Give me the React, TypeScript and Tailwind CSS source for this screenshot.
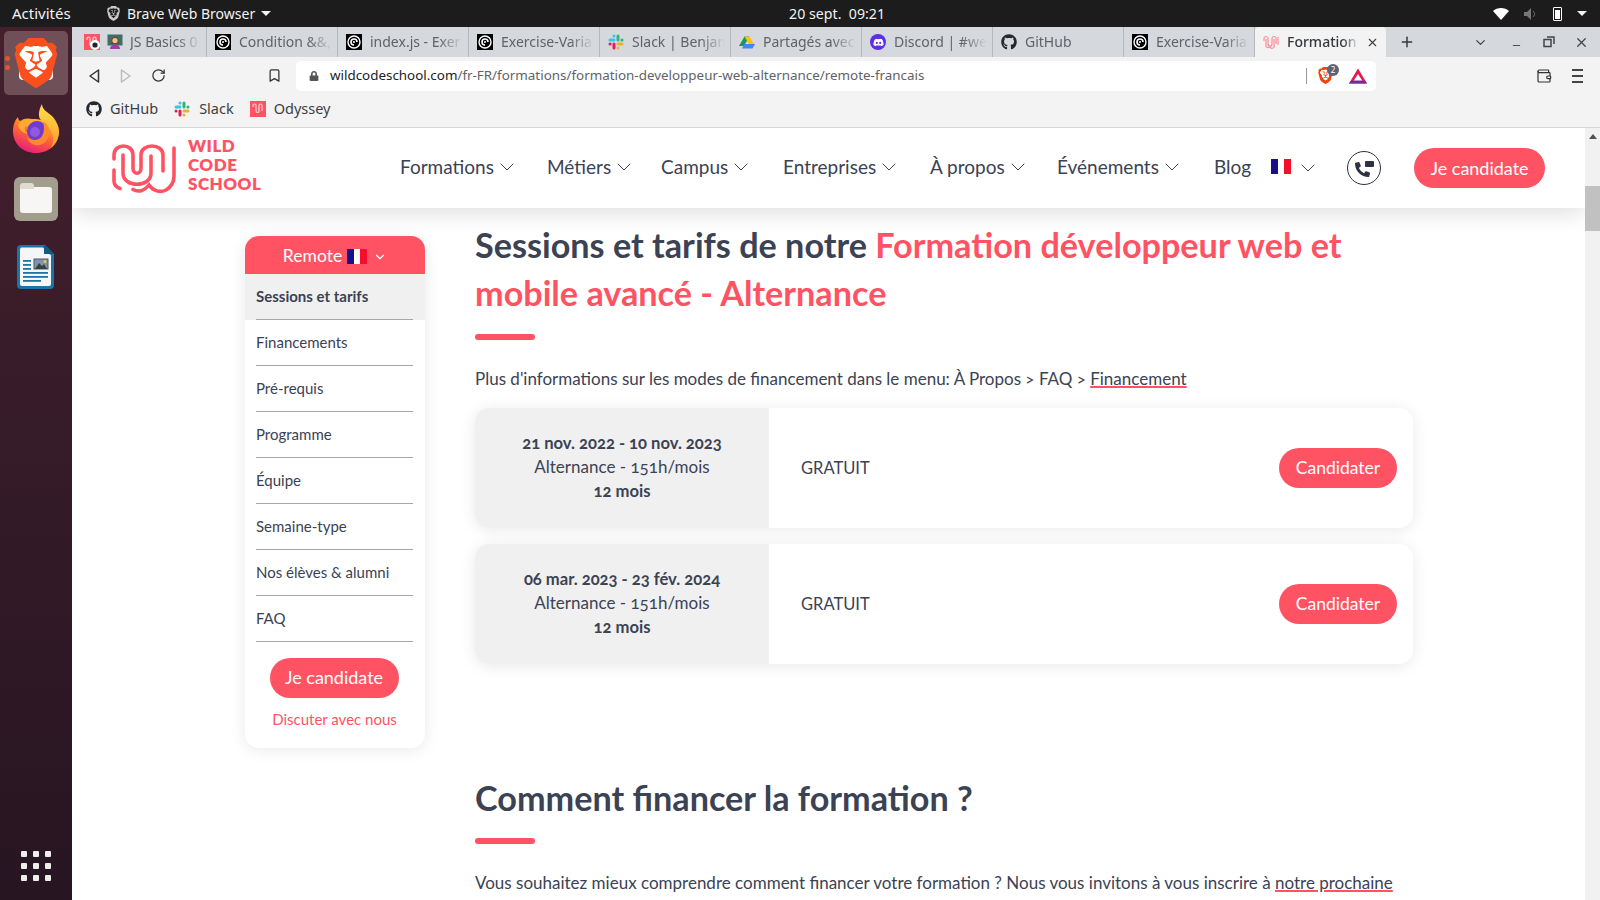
import React from "react";
import { FaGithub, FaDiscord, FaPhoneAlt, FaLock } from "react-icons/fa";
import { SiBrave } from "react-icons/si";
import { ChevronDown, Plus, X, Minus, RotateCw, Bookmark, Wallet } from "lucide-react";

const coral = "text-[#ff5364]";

const BraveIcon = ({ size = 48 }: { size?: number }) => (
  <span className="relative inline-flex items-center justify-center" style={{ width: size, height: size }}>
    <span className="absolute inset-[16%] bg-white rounded-sm" />
    <SiBrave className="relative text-[#fb4f1e]" size={size} />
  </span>
);

const Swirl = () => (
  <svg width="16" height="16" viewBox="0 0 16 16" className="shrink-0">
    <rect width="16" height="16" fill="#000" />
    <circle cx="8" cy="8" r="6" fill="none" stroke="#fff" strokeWidth="1.4" />
    <path d="M8 11a3 3 0 1 1 3-3" fill="none" stroke="#fff" strokeWidth="1.6" />
    <circle cx="8" cy="8" r="1" fill="#fff" />
  </svg>
);

const OdysseyIcon = ({ dot }: { dot?: boolean }) => (
  <svg width="16" height="16" viewBox="0 0 16 16" className="shrink-0">
    <rect width="16" height="16" fill="#ff5364" />
    <path d="M3 6V4.500a1.500 1.500 0 0 1 3 0V10a1.500 1.500 0 0 0 3 0V4.500a1.500 1.500 0 0 1 3 0V10" fill="none" stroke="#ffd5d9" strokeWidth="1.2" />
    {dot && <circle cx="11" cy="11" r="5" fill="#fff" />}
    {dot && <circle cx="11" cy="11" r="2.6" fill="#1f2430" />}
  </svg>
);

const ActiveFavicon = () => (
  <svg width="16" height="16" viewBox="0 0 16 16" className="shrink-0" fill="none" stroke="#ff8d98" strokeWidth="1.2">
    <path d="M1 7V4.500a2 2 0 0 1 4 0V10a2 2 0 0 0 4 0V4.500a2 2 0 0 1 4 0V10" />
    <path d="M3 5v6a2 2 0 0 0 4 1M11 5v6a2 2 0 0 1-4 2M15 3v8" />
  </svg>
);

const SlackIcon = () => (
  <svg width="16" height="16" viewBox="0 0 16 16" className="shrink-0" strokeLinecap="round" strokeWidth="3" fill="none">
    <path d="M6 2v.1M2 6h4" stroke="#36c5f0" />
    <path d="M14 6h-.1M10 2v4" stroke="#2eb67d" />
    <path d="M10 14v-.1M14 10h-4" stroke="#ecb22e" />
    <path d="M2 10h.1M6 14v-4" stroke="#e01e5a" />
  </svg>
);

const DriveIcon = () => (
  <svg width="16" height="16" viewBox="0 0 16 16" className="shrink-0">
    <path d="M5.500 1.500h5L5 11H0z" fill="#0f9d58" transform="translate(0 1)" />
    <path d="M5.500 2.500h5l5.500 9.500h-5z" fill="#ffc107" />
    <path d="M3 14.500 5.500 10H16l-2.500 4.500z" fill="#4285f4" />
  </svg>
);

const TeacherEmoji = () => (
  <svg width="16" height="16" viewBox="0 0 16 16" className="shrink-0">
    <rect x="0.500" y="0.500" width="15" height="11" fill="#3e6e64" />
    <path d="M3 15c0-3 2-4.500 5-4.500s5 1.500 5 4.500z" fill="#9a3fb0" />
    <path d="M4.500 8c0-7 7-7 7 0l.5 2H4z" fill="#6b4a2f" />
    <circle cx="8" cy="6.500" r="2.600" fill="#f3c28f" />
  </svg>
);

const tabs = [
  { label: "JS Basics 0", icon: <TeacherEmoji />, first: true },
  { label: "Condition &&,", icon: <Swirl /> },
  { label: "index.js - Exer", icon: <Swirl /> },
  { label: "Exercise-Varia", icon: <Swirl /> },
  { label: "Slack | Benjam", icon: <SlackIcon /> },
  { label: "Partagés avec", icon: <DriveIcon /> },
  { label: "Discord | #wel", icon: <span className="w-4 h-4 rounded-full bg-[#5c2ee6] flex items-center justify-center shrink-0"><FaDiscord size={11} className="text-white" /></span> },
  { label: "GitHub", icon: <FaGithub size={16} className="text-[#24292e] shrink-0" /> },
  { label: "Exercise-Varia", icon: <Swirl /> },
];

const navItems = [
  { label: "Formations", width: "w-[147px]" },
  { label: "Métiers", width: "w-[114px]" },
  { label: "Campus", width: "w-[122px]" },
  { label: "Entreprises", width: "w-[147px]" },
  { label: "À propos", width: "w-[127px]" },
  { label: "Événements", width: "w-[157px]" },
];

const sideItems = ["Sessions et tarifs", "Financements", "Pré-requis", "Programme", "Équipe", "Semaine-type", "Nos élèves & alumni", "FAQ"];

const sessions = [
  { dates: "21 nov. 2022 - 10 nov. 2023" },
  { dates: "06 mar. 2023 - 23 fév. 2024" },
];

const Flag = ({ className }: { className: string }) => (
  <span className={"flex shrink-0 " + className}>
    <span className="flex-1 bg-[#1a0f8a]" />
    <span className="flex-1 bg-white" />
    <span className="flex-1 bg-[#f50f2d]" />
  </span>
);

const Logo = () => (
  <svg width="80" height="60" viewBox="0 0 80 60" fill="none" stroke="#ff5364" strokeWidth="3.6" strokeLinecap="round" className="shrink-0">
    <path d="M6 32V43C6 46 8 49 12 50.500" />
    <path d="M6 21V17C6 5 25 5 25 17V30C25 37 33 37 33 30V17C33 5 55 5 55 17V33" />
    <path d="M15 17V35C15 50 43 50 43 35V18" />
    <path d="M25 51.500C31 55 37 52 41 47C45 53 52 55 58 52C63 49 66 44 66 38V10" />
  </svg>
);

const Firefox = () => (
  <svg width="48" height="50" viewBox="0 0 48 50">
    <defs>
      <linearGradient id="ffa" x1="0.800" y1="0" x2="0.300" y2="1">
        <stop offset="0" stopColor="#ffd43a" />
        <stop offset="0.500" stopColor="#ff6a2f" />
        <stop offset="1" stopColor="#e8197e" />
      </linearGradient>
      <linearGradient id="ffb" x1="0.500" y1="0" x2="0.500" y2="1">
        <stop offset="0" stopColor="#ffe04a" />
        <stop offset="1" stopColor="#ff9a2a" />
      </linearGradient>
    </defs>
    <path d="M1 27c0-6 2-11 5-14 0 2 1 3 2 4 4-3 8-3 12-2 6 0 14 0 27 12 0 13-10 22-23 22S1 40 1 27z" fill="url(#ffa)" />
    <path d="M30 0c0 6 6 8 11 13 4 5 6 10 6 14 0 7-3 13-8 17 3-6 3-13-1-19-3-5-7-6-10-10-2-4-1-10 2-15z" fill="url(#ffb)" />
    <path d="M6 21c3-6 12-8 19-4-4 0-7 2-8 5l-4 1c-1 3 1 5 3 7-5-1-9-4-10-9z" fill="#ffa930" />
    <circle cx="25" cy="27" r="10" fill="#6f3bd0" />
    <circle cx="23" cy="28" r="5" fill="#8f5ae0" />
    <path d="M31 17c6 4 8 11 5 17-3 6-8 8-13 7-4-1-7-4-8-8 3 3 8 4 12 2 5-3 6-10 4-18z" fill="#ff8a2b" />
  </svg>
);

const Files = () => (
  <div className="w-[44px] h-[44px] rounded-[6px] bg-[#a39d8d] flex items-center justify-center">
    <div className="relative w-[32px] h-[26px] rounded-[3px] bg-[#f7f6f4] mt-[2px]">
      <span className="absolute -top-[4px] left-0 w-[14px] h-[6px] rounded-t-[3px] bg-[#dfdbd1]" />
    </div>
  </div>
);

const Writer = () => (
  <svg width="38" height="46" viewBox="0 0 38 46">
    <path d="M4 1h24l9 9v31a4 4 0 0 1-4 4H4a4 4 0 0 1-4-4V5a4 4 0 0 1 4-4z" fill="#1b75a8" />
    <path d="M4 3.500h22l8 8V40a2 2 0 0 1-2 2H5a2 2 0 0 1-2-2V5z" fill="#f4f6f8" />
    <path d="M27 0l10 10H27z" fill="#125a85" />
    <rect x="6" y="16" width="8" height="1.800" fill="#1b75a8" />
    <rect x="6" y="20" width="8" height="1.800" fill="#1b75a8" />
    <rect x="6" y="24" width="8" height="1.800" fill="#1b75a8" />
    <rect x="6" y="28" width="25" height="1.800" fill="#1b75a8" />
    <rect x="6" y="32" width="25" height="1.800" fill="#1b75a8" />
    <rect x="6" y="36" width="18" height="1.800" fill="#1b75a8" />
    <rect x="17" y="15" width="14" height="10" fill="#7f96a8" stroke="#46586a" />
    <path d="M18 25l4-6 3 3 2-2 3 5z" fill="#3a4048" />
    <circle cx="28" cy="17.500" r="1.500" fill="#f4c63a" />
  </svg>
);

const Triangle = () => (
  <svg width="18" height="16" viewBox="0 0 18 16">
    <path d="M9 0.500 18 15.500H0z" fill="#e8174f" />
    <path d="M9 6 13.500 13h-9z" fill="#fff" />
    <path d="M0 15.500h18l-2-3H2z" fill="#7a2a9c" />
  </svg>
);

const SessionCard = ({ dates }: { dates: string }) => (
  <div className="flex h-[120px] rounded-[14px] overflow-hidden bg-white shadow-[0_2px_16px_rgba(0,0,0,0.09)]">
    <div className="w-[294px] bg-[#f0f0f0] flex flex-col items-center justify-center pb-[2px] text-[16.600px] leading-[24px]">
      <span className="font-bold">{dates}</span>
      <span className="text-[17px]">Alternance - 151h/mois</span>
      <span className="font-bold">12 mois</span>
    </div>
    <div className="flex-1 flex items-center justify-between pl-[32px] pr-[16px]">
      <span className="text-[16.500px]">GRATUIT</span>
      <button className="w-[118px] h-[40px] rounded-full bg-[#ff5364] text-white text-[17.500px]">Candidater</button>
    </div>
  </div>
);

const App: React.FC = () => {
  return (
    <div className="h-screen flex flex-col overflow-hidden bg-white font-['Noto_Sans',sans-serif]">
      {/* gnome bar */}
      <div className="h-[27px] shrink-0 bg-[#1c1c1c] text-[#f2f2f2] text-[14px] flex items-center relative">
        <span className="ml-[12px] w-[94px] text-[15px]">Activités</span>
        <SiBrave size={15} className="text-[#c9c9c9]" />
        <span className="ml-[6px]">Brave Web Browser</span>
        <span className="ml-[6px] w-0 h-0 border-x-[5px] border-x-transparent border-t-[5px] border-t-[#f2f2f2]" />
        <span className="flex-1 text-center pr-[90px] text-[14.200px]">20 sept.&nbsp; 09:21</span>
        <svg width="16" height="12" viewBox="0 0 16 12" className="mr-[14px]"><path d="M8 12 0 3c4-4 12-4 16 0z" fill="#fff" /></svg>
        <svg width="14" height="14" viewBox="0 0 14 14" className="mr-[16px]"><path d="M1 5h3l4-4v12L4 9H1z" fill="#777" /><path d="M10 4c2 2 2 4 0 6" stroke="#777" fill="none" /></svg>
        <span className="relative w-[9px] h-[14px] border border-white rounded-[1px] flex items-end p-[1px] mr-[15px]"><span className="w-full h-[9px] bg-white" /></span>
        <span className="mr-[13px] w-0 h-0 border-x-[5px] border-x-transparent border-t-[5px] border-t-[#f2f2f2]" />
      </div>

      <div className="flex flex-1 min-h-0">
        {/* dock */}
        <div className="w-[72px] shrink-0 bg-gradient-to-b from-[#44202d] to-[#271522] flex flex-col items-center relative pt-[4px]">
          <div className="w-[64px] h-[64px] rounded-[5px] bg-[#6f5058] flex items-center justify-center">
            <BraveIcon size={50} />
          </div>
          <span className="absolute left-[5px] top-[29px] w-[5px] h-[5px] rounded-full bg-[#e95420]" />
          <span className="absolute left-[5px] top-[38px] w-[5px] h-[5px] rounded-full bg-[#e95420]" />
          <div className="mt-[9px] h-[50px]"><Firefox /></div>
          <div className="mt-[23px]"><Files /></div>
          <div className="mt-[23px]"><Writer /></div>
          <div className="mt-auto mb-[19px] grid grid-cols-3 gap-[6px]">
            {Array.from({ length: 9 }).map((_, i) => (
              <span key={i} className="w-[6px] h-[6px] rounded-[1px] bg-[#eeeeea]" />
            ))}
          </div>
        </div>

        {/* browser */}
        <div className="flex-1 min-w-0 flex flex-col">
          <div className="h-[30px] shrink-0 bg-[#d5d8dc] flex items-center pl-[4px] text-[14px] text-[#5f6368]">
            {tabs.map((t, i) => (
              <div key={i} className={"w-[131px] h-full flex items-center pl-[8px] border-r border-[#b4b7bb] shrink-0 " + (t.first ? "gap-[7px]" : "gap-[8px]")}>
                {t.first && <OdysseyIcon dot />}
                {t.icon}
                <span className="overflow-hidden [mask-image:linear-gradient(to_left,transparent,black_24px)] flex-1 mr-[5px] pb-[2px] whitespace-nowrap">{t.label}</span>
              </div>
            ))}
            <div className="w-[131px] h-full bg-[#f3f3f3] rounded-t-[4px] flex items-center pl-[8px] shrink-0 text-[#33383d] font-medium">
              <ActiveFavicon />
              <span className="ml-[8px] flex-1 overflow-hidden pb-[2px] whitespace-nowrap [mask-image:linear-gradient(to_left,transparent,black_16px)]">Formation développeur</span>
              <X size={13} className="mx-[7px] text-[#3c4043] shrink-0" />
            </div>
            <Plus size={16} strokeWidth={2.2} className="ml-[13px] text-[#33383d]" />
            <ChevronDown size={15} className="ml-[58px] text-[#444]" />
            <Minus size={11} className="ml-[23px] mt-[6px] text-[#444]" />
            <svg width="12" height="12" viewBox="0 0 12 12" className="ml-[21px]" fill="none" stroke="#444" strokeWidth="1.500"><rect x="1" y="3.500" width="7" height="7" /><path d="M4 1h7v7" /></svg>
            <X size={15} className="ml-[19px] text-[#444]" />
          </div>

          <div className="h-[37px] shrink-0 bg-[#f3f3f3] flex items-center text-[#333] relative">
            <svg width="12" height="14" viewBox="0 0 12 14" className="ml-[16px]" fill="none" stroke="#333" strokeWidth="1.500"><path d="M10.500 1 2 7l8.500 6z" strokeLinejoin="round" /></svg>
            <svg width="12" height="14" viewBox="0 0 12 14" className="ml-[20px]" fill="none" stroke="#bbb" strokeWidth="1.500"><path d="M1.500 1 10 7l-8.500 6z" strokeLinejoin="round" /></svg>
            <RotateCw size={15} strokeWidth={2} className="ml-[19px]" />
            <Bookmark size={15} strokeWidth={2} className="ml-[101px]" />
            <div className="ml-[14px] w-[1080px] h-[30px] bg-white rounded-[5px] flex items-center text-[13.400px]">
              <FaLock size={10} className="ml-[13px] text-[#555]" />
              <span className="ml-[11px] text-[#202124]">wildcodeschool.com<span className="text-[#5f6368]">/fr-FR/formations/formation-developpeur-web-alternance/remote-francais</span></span>
              <span className="ml-auto h-[16px] w-px bg-[#999]" />
              <span className="relative ml-[10px] w-[16px]">
                <SiBrave size={17} className="text-[#f4400d]" />
                <span className="absolute -top-[3px] left-[10px] w-[12px] h-[12px] rounded-full bg-[#5e6275] text-white text-[8px] leading-[12px] text-center">2</span>
              </span>
              <span className="ml-[16px] mr-[9px] flex"><Triangle /></span>
            </div>
            <Wallet size={16} strokeWidth={1.800} className="ml-[160px]" />
            <span className="ml-[20px] flex flex-col gap-[4px]">
              <span className="w-[11px] h-[2px] bg-[#444]" />
              <span className="w-[11px] h-[2px] bg-[#444]" />
              <span className="w-[11px] h-[2px] bg-[#444]" />
            </span>
          </div>

          <div className="h-[34px] shrink-0 bg-[#f3f3f3] border-b border-[#d6d6d6] flex items-center pb-[3px] text-[14.500px] text-[#3c4043]">
            <FaGithub size={16} className="ml-[14px] text-[#24292e]" />
            <span className="ml-[8px]">GitHub</span>
            <span className="ml-[16px]"><SlackIcon /></span>
            <span className="ml-[9px]">Slack</span>
            <span className="ml-[16px]"><OdysseyIcon /></span>
            <span className="ml-[8px]">Odyssey</span>
          </div>

          {/* page */}
          <div className="flex-1 min-h-0 flex">
            <div className="flex-1 min-w-0 overflow-hidden font-['Lato',sans-serif] text-[#3b4254] oldstyle-nums">
              <header className="relative z-10 h-[80px] bg-white shadow-[0_6px_20px_rgba(0,0,0,0.12)] flex items-center">
                <div className="ml-[36px] w-[292px] flex items-center">
                  <Logo />
                  <div className="text-[17px] leading-[19px] font-extrabold tracking-[0.5px] text-[#ff5364] mb-[8px]">
                    <div>WILD</div>
                    <div>CODE</div>
                    <div>SCHOOL</div>
                  </div>
                </div>
                {navItems.map((n) => (
                  <div key={n.label} className={"flex items-center mb-[2px] text-[19px] " + n.width}>
                    <span>{n.label}</span>
                    <ChevronDown size={24} strokeWidth={1} className="ml-[1px]" />
                  </div>
                ))}
                <span className="text-[19px] mb-[2px] w-[57px]">Blog</span>
                <Flag className="w-[20px] h-[15px] -mt-[3px]" />
                <ChevronDown size={24} strokeWidth={1} className="ml-[5px] mr-[1px]" />
                <div className="ml-[26px] w-[34px] h-[34px] rounded-full border border-[#2d3343] flex items-center justify-center relative">
                  <FaPhoneAlt size={15} className="text-[#2d3343] mt-[3px] -ml-[4px]" />
                  <span className="absolute top-[9px] right-[6px] w-[9px] h-[6px] bg-[#2d3343] rounded-[1px]" />
                </div>
                <button className="ml-[33px] w-[131px] h-[40px] rounded-full bg-[#ff5364] text-white text-[18px]">Je candidate</button>
              </header>

              <div className="flex pl-[173px] pt-[13px] gap-[50px] items-start">
                <aside className="w-[180px] shrink-0 mt-[15px] h-[512px] rounded-[14px] bg-white shadow-[0_2px_16px_rgba(0,0,0,0.09)] overflow-hidden flex flex-col items-center">
                  <div className="w-full h-[38px] shrink-0 bg-[#ff5364] text-white text-[17.500px] flex items-center justify-center pt-[3px]">
                    <span>Remote</span>
                    <Flag className="w-[20px] h-[15px] ml-[5px]" />
                    <ChevronDown size={14} className="ml-[6px]" />
                  </div>
                  {sideItems.map((s, i) => (
                    <div key={s} className={"w-full h-[46px] shrink-0 pl-[11px] pr-[12px] " + (i === 0 ? "bg-[#f0f0f0]" : "")}>
                      <div className={"h-full border-b border-[#a5a7ad] flex items-center text-[15px] " + (i === 0 ? "font-bold" : "")}>{s}</div>
                    </div>
                  ))}
                  <button className="mt-[16px] mr-[2px] w-[129px] h-[40px] shrink-0 rounded-full bg-[#ff5364] text-white text-[18px] pb-[1px]">Je candidate</button>
                  <span className={"mt-[10px] mr-[1px] text-[15px] " + coral}>Discuter avec nous</span>
                </aside>

                <main className="w-[938px] shrink-0">
                  <h2 className="text-[34.200px] leading-[48px] font-bold">
                    Sessions et tarifs de notre <span className={coral}>Formation développeur web et mobile avancé - Alternance</span>
                  </h2>
                  <div className="mt-[17px] w-[60px] h-[6px] rounded-full bg-[#ff5364]" />
                  <p className="mt-[27px] text-[17px] leading-[24px]">
                    Plus d'informations sur les modes de financement dans le menu: À Propos &gt; FAQ &gt; <span className="underline decoration-[#ff5364] decoration-2 underline-offset-[1px]">Financement</span>
                  </p>
                  <div className="mt-[17px] flex flex-col gap-[16px]">
                    {sessions.map((s) => (
                      <SessionCard key={s.dates} dates={s.dates} />
                    ))}
                  </div>
                  <h2 className="mt-[110px] text-[34.200px] leading-[48px] font-bold">Comment financer la formation ?</h2>
                  <div className="mt-[16px] w-[60px] h-[6px] rounded-full bg-[#ff5364]" />
                  <p className="mt-[27px] text-[17px] leading-[24px] whitespace-nowrap">
                    Vous souhaitez mieux comprendre comment financer votre formation ? Nous vous invitons à vous inscrire à <span className="underline decoration-[#ff5364] decoration-2 underline-offset-[1px]">notre prochaine</span>
                  </p>
                </main>
              </div>
            </div>

            {/* scrollbar */}
            <div className="w-[15px] shrink-0 bg-[#f1f1f1] flex flex-col items-center relative">
              <span className="mt-[6px] w-0 h-0 border-x-[4px] border-x-transparent border-b-[5px] border-b-[#505050]" />
              <span className="absolute top-[58px] left-0 w-full h-[45px] bg-[#c1c1c1]" />
            </div>
          </div>
        </div>
      </div>
    </div>
  );
};

export default App;
